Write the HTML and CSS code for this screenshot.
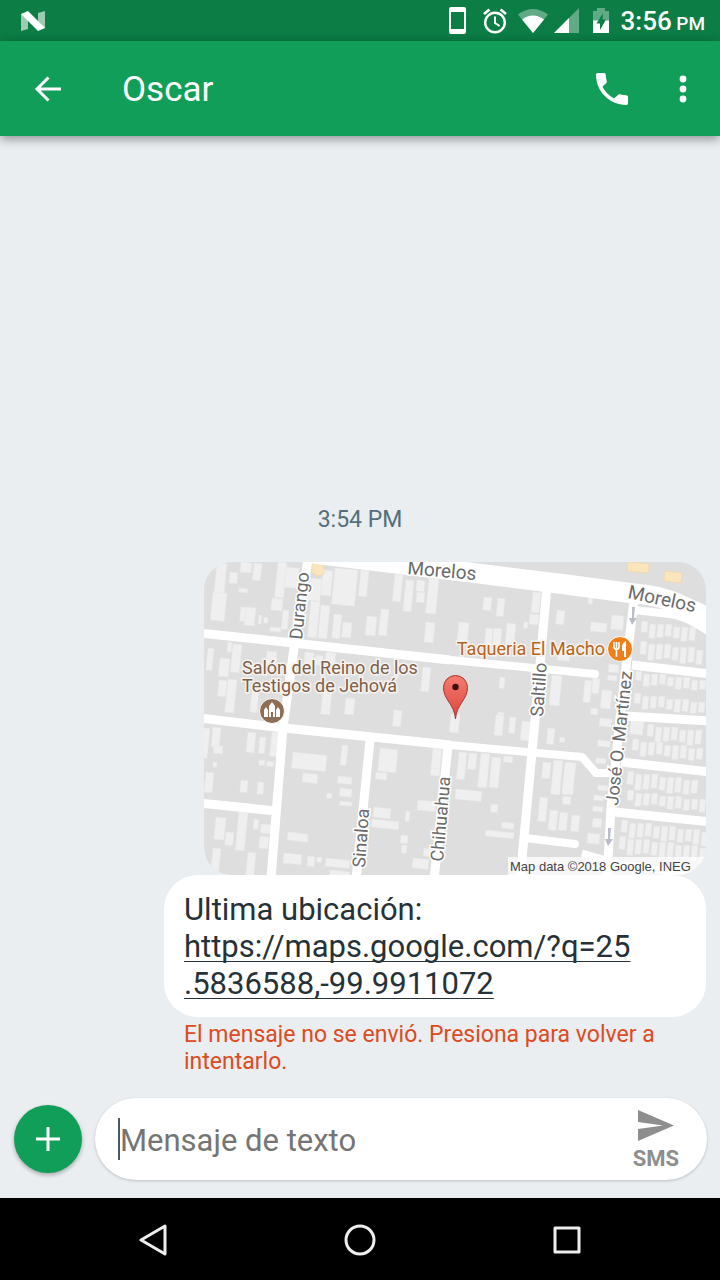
FILE: index.html
```html
<!DOCTYPE html>
<html lang="es">
<head>
<meta charset="utf-8">
<meta name="viewport" content="width=device-width, initial-scale=1">
<title>Oscar</title>
<link rel="stylesheet" href="styles.css">
</head>
<body>
<div class="status-bar">
  <svg class="icon-n" viewBox="0 0 24 20" aria-hidden="true">
    <path d="M0 3 7 1v17l-7 2zM17 2l7-2v17l-7 2z" fill="#fff" opacity=".6"/>
    <path d="M0 3 7 0l17 17-7 3z" fill="#fff"/>
  </svg>
  <div class="status-icons">
    <svg class="icon-phone-outline" viewBox="0 0 17 27" aria-hidden="true"><path fill="#fff" fill-rule="evenodd" d="M2 0h13a2 2 0 0 1 2 2v23a2 2 0 0 1-2 2H2a2 2 0 0 1-2-2V2a2 2 0 0 1 2-2zm0 5v17h13V5z"/></svg>
    <svg class="icon-alarm" viewBox="0 0 24 26" fill="none" stroke="#fff" aria-hidden="true"><circle cx="12" cy="14.500" r="9.800" stroke-width="2.400"/><path d="M12 8.500v6.500l4.600 3" stroke-width="2"/><path d="m1 6 5.500-4.600M23 6l-5.500-4.600" stroke-width="2.600"/></svg>
    <svg class="icon-wifi" viewBox="0 0 30 24" fill="#fff" aria-hidden="true"><path opacity=".35" d="M0 5.500Q15-5.500 30 5.500L15 24z"/><path d="M4 10.500Q15 2.500 26 10.500L15 24z"/></svg>
    <svg class="icon-signal" viewBox="0 0 25 25" fill="#fff" aria-hidden="true"><path opacity=".35" d="M25 0v25H0z"/><path d="M15 10v15H0z"/></svg>
    <svg class="icon-battery" viewBox="0 0 16 25" aria-hidden="true"><path fill="#fff" opacity=".35" d="M0 3h4V0h8v3h4v10H0z"/><path fill="#fff" d="M0 12.500h16V25H0z"/><path fill="#0b7d45" d="M10 5 3.500 15.500H7V22l6-10.500H9.500z"/></svg>
    <time class="clock">3:56 <small>PM</small></time>
  </div>
</div>

<header class="app-bar">
  <button class="icon-button" type="button" aria-label="Atrás">
    <svg class="icon-back" viewBox="0 0 28 26" fill="none" stroke="#fff" stroke-width="3" aria-hidden="true"><path d="M14.500 1.500 3 13l11.500 11.500M2.500 13H27"/></svg>
  </button>
  <h1 class="contact">Oscar</h1>
  <button class="icon-button" type="button" aria-label="Llamar">
    <svg class="icon-call" viewBox="3 3 18 18" fill="#fff" aria-hidden="true"><path d="M6.620 10.790c1.440 2.830 3.760 5.140 6.590 6.590l2.200-2.200c.27-.27.67-.36 1.020-.24 1.120.37 2.330.57 3.570.57.550 0 1 .45 1 1V20c0 .55-.45 1-1 1-9.390 0-17-7.610-17-17 0-.55.45-1 1-1h3.500c.55 0 1 .45 1 1 0 1.250.2 2.450.57 3.570.11.35.03.74-.25 1.020l-2.200 2.200z"/></svg>
  </button>
  <button class="icon-button menu-button" type="button" aria-label="Más opciones">
    <svg class="icon-more" viewBox="0 0 8 28" fill="#fff" aria-hidden="true"><circle cx="4" cy="4" r="3.400"/><circle cx="4" cy="14" r="3.400"/><circle cx="4" cy="24" r="3.400"/></svg>
  </button>
</header>

<main class="conversation">
  <time class="timestamp">3:54 PM</time>
  <div class="message">
    <div class="map-frame">
    <svg class="map" viewBox="204 562 502 313" role="img" aria-label="Mapa">
      <rect x="204" y="562" width="502" height="313" fill="#dedede"/>
      <g id="buildings" fill="#efefef" stroke="#e6e6e6" stroke-width=".5"></g>
      <g fill="#fbe5bd" stroke="#f3d5a0" stroke-width=".6"><path d="m312 564 6-1 6 2v9l-6 2-6-3z"/><path d="m628 562 21 2-1 9-21-2z"/><path d="m665 571 17 2-1 10-17-2z"/></g>
      <g fill="none" stroke="#fff" stroke-width="9" stroke-linejoin="round">
        <path stroke-width="20" d="M300 552 450 570l120 15 60 8q28 2 46 10l40 18"/>
        <path stroke-width="8" d="m634 610 36 4q16 2 38 17"/>
        <path d="m308 560-14 88-11 80-12 150M370 740l-14 140M448 746l-14 134M547 586l-12 134-15 160M634 600l-14 118-9 90-4 70"/>
        <path d="m200 633 250 27M200 718l84 10 166 17M632 665l78 9M625 716l85 5M621 762l89 10M615 812l95 10M200 803l76 8"/>
        <path stroke-linecap="round" stroke-width="8" d="m440 659 155 15M440 744l142 13 14 16h15M525 838l50 6"/>
        <path stroke-width="7" d="m582 853 35 10 90 15"/>
      </g>
      <g fill="#b9bcc9"><path d="M632 607h3l-1 11h3l-5 7-3-7h3z"/><path d="M608 828h3l-1 11h3l-5 7-3-7h3z"/></g>
      <g class="street">
        <text class="avenue" transform="translate(407 574) rotate(5)">Morelos</text>
        <text class="avenue" transform="translate(627 598) rotate(12)">Morelos</text>
        <text transform="translate(302 640) rotate(-84)">Durango</text>
        <text transform="translate(543 717) rotate(-86)">Saltillo</text>
        <text transform="translate(365 868) rotate(-86)">Sinaloa</text>
        <text transform="translate(443 862) rotate(-85)">Chihuahua</text>
        <text transform="translate(618 806) rotate(-84)">José O. Martínez</text>
      </g>
      <g class="place">
        <text x="242" y="674">Salón del Reino de los</text>
        <text x="242" y="692">Testigos de Jehová</text>
      </g>
      <text class="place food" x="605" y="655" text-anchor="end">Taqueria El Macho</text>
      <circle cx="272" cy="711" r="12.500" fill="#8d6e57" stroke="#fff"/>
      <path fill="#fff" d="M264 717v-7l2-3 2 3v7zM276 717v-7l2-3 2 3v7zM269 717v-11l3-4 3 4v11h-2v-5h-2v5z"/>
      <circle cx="620" cy="649" r="12.500" fill="#ef8019" stroke="#fff"/>
      <path d="M614 642v5q0 2 2.500 2.500V657M619 642v5q0 2-2.500 2.500V642" fill="none" stroke="#fff" stroke-width="1.600"/>
      <path d="M626 641v16h-2v-6h-2v-5q1-4 4-5z" fill="#fff"/>
      <defs><linearGradient id="pin" x1="0" y1="0" x2="0" y2="1"><stop offset="0" stop-color="#f77b71"/><stop offset="1" stop-color="#d9453c"/></linearGradient></defs>
      <path d="M455.500 719c-1-15-12-19-12-31.500a12 12 0 0 1 24 0c0 12.500-11 16.500-12 31.500z" fill="url(#pin)" stroke="#a8352d"/>
      <circle cx="455.500" cy="687" r="3.200" fill="#3c0f0c"/>
      <rect x="508" y="857" width="198" height="18" fill="#fff" opacity=".75"/>
      <text class="attribution" x="510" y="871">Map data ©2018 Google, INEG</text>
    </svg>
    </div>
    <div class="bubble">
      <p>Ultima ubicación:</p>
      <a href="https://maps.google.com/?q=25.5836588,-99.9911072">https://maps.google.com/?q=25<wbr>.5836588,-99.9911072</a>
    </div>
    <button class="retry" type="button">El mensaje no se envió. Presiona para volver a intentarlo.</button>
  </div>
</main>

<form class="composer">
  <button class="attach" type="button" aria-label="Adjuntar">
    <svg class="icon-plus" viewBox="0 0 24 24" stroke="#fff" stroke-width="3" aria-hidden="true"><path d="M12 0v24M0 12h24"/></svg>
  </button>
  <div class="field">
    <input class="text-input" type="text" placeholder="Mensaje de texto" aria-label="Mensaje de texto">
    <button class="send" type="button">
      <svg class="icon-send" viewBox="0 0 36 31" fill="#8e8e8e" aria-hidden="true"><path d="M0 0 36 15.500 0 31V19l25-3.500L0 12z"/></svg>
      <span>SMS</span>
    </button>
  </div>
</form>

<nav class="nav-bar">
  <button class="nav-button" type="button" aria-label="Atrás"><svg class="nav-icon" viewBox="0 0 32 32"><path d="M28 2v28L4 16z"/></svg></button>
  <button class="nav-button" type="button" aria-label="Inicio"><svg class="nav-icon" viewBox="0 0 32 32"><circle cx="16" cy="16" r="14"/></svg></button>
  <button class="nav-button" type="button" aria-label="Recientes"><svg class="nav-icon" viewBox="0 0 32 32"><path d="M4 4h24v24H4z"/></svg></button>
</nav>
<script src="map.js"></script>
</body>
</html>
```
FILE: styles.css
```css
* { box-sizing: border-box; }

body {
  margin: 0;
  min-height: 100vh;
  display: flex;
  flex-direction: column;
  background: #eaeef1;
  font-family: Roboto, "Noto Sans", sans-serif;
}

button {
  border: 0;
  padding: 0;
  background: none;
  font: inherit;
  color: inherit;
}

svg { display: block; flex: none; }

.status-bar {
  display: flex;
  align-items: center;
  justify-content: space-between;
  height: 41px;
  padding: 0 15px 0 21px;
  background: #0b7d45;
  color: #fff;
}
.icon-n { width: 24px; height: 20px; }
.status-icons { display: flex; align-items: center; }
.icon-phone-outline { width: 17px; height: 27px; margin-right: 17px; }
.icon-alarm { width: 24px; height: 26px; margin-right: 11px; }
.icon-wifi { width: 30px; height: 24px; margin-right: 6px; }
.icon-signal { width: 25px; height: 25px; margin-right: 14px; }
.icon-battery { width: 16px; height: 25px; margin-right: 12px; }
.clock { font-size: 26px; line-height: 32px; font-weight: 500; padding-top: 3px; }
.clock small { font-size: 19px; margin-left: -2px; }

.app-bar {
  position: relative;
  display: flex;
  align-items: center;
  height: 95px;
  padding: 0 13px 0 14px;
  background: #119e59;
  color: #fff;
  box-shadow: 0 3px 10px rgba(0, 0, 0, .4);
}
.icon-button {
  display: flex;
  align-items: center;
  justify-content: center;
  width: 68px;
  height: 68px;
}
.icon-back { width: 28px; height: 26px; }
.icon-call { width: 32px; height: 32px; }
.icon-more { width: 8px; height: 28px; }
.menu-button { width: 48px; margin-left: 13px; }
.contact {
  flex: 1;
  margin: 0;
  padding: 3px 0 0 40px;
  font-size: 35px;
  line-height: 44px;
  font-weight: 400;
}

.conversation {
  flex: 1;
  display: flex;
  flex-direction: column;
  justify-content: flex-end;
  padding: 0 14px 23px;
}
.timestamp {
  margin-bottom: 28px;
  text-align: center;
  font-size: 23px;
  line-height: 28px;
  color: #546e7a;
}
.message {
  width: 79%;
  max-width: 542px;
  align-self: flex-end;
}
.map-frame { padding-left: 40px; }
.map {
  width: 100%;
  height: auto;
  border-radius: 28px;
}
.street { font-size: 18px; fill: #6b6b6b; stroke: #fff; stroke-width: 3px; paint-order: stroke; }
.avenue { font-size: 19px; }
.place { font-size: 18px; fill: #7d5f4a; stroke: #f7f3f0; stroke-width: 3px; paint-order: stroke; }
.food { fill: #b5651b; }
.attribution { font-family: "Liberation Sans", Arial, sans-serif; font-size: 13px; fill: #444; }

.bubble {
  padding: 16px 20px 15px;
  border-radius: 34px;
  background: #fff;
  color: #263238;
  font-size: 31px;
  line-height: 37px;
}
.bubble p { margin: 0; }
.bubble a {
  color: inherit;
  text-decoration-thickness: 1px;
  text-underline-offset: 4px;
  text-decoration-skip-ink: none;
}
.retry {
  width: 100%;
  padding: 4px 20px 0;
  text-align: left;
  font-size: 23px;
  line-height: 27px;
  color: #dd4b20;
}

.composer {
  display: flex;
  align-items: center;
  gap: 13px;
  padding: 0 13px 18px 14px;
}
.attach {
  display: flex;
  align-items: center;
  justify-content: center;
  flex: none;
  width: 68px;
  height: 68px;
  border-radius: 50%;
  background: #119e59;
  box-shadow: 0 2px 4px rgba(0, 0, 0, .3);
}
.icon-plus { width: 24px; height: 24px; }
.field {
  flex: 1;
  display: flex;
  align-items: center;
  height: 82px;
  padding: 0 28px 0 23px;
  border-radius: 41px;
  background: #fff;
  box-shadow: 0 1px 3px rgba(0, 0, 0, .2);
}
.field::before {
  content: "";
  width: 2px;
  height: 42px;
  background: #455a64;
}
.text-input {
  flex: 1;
  min-width: 0;
  border: 0;
  padding: 3px 0 0;
  background: none;
  outline: 0;
  font: 400 31px/40px Roboto, "Noto Sans", sans-serif;
  color: #263238;
}
.text-input::placeholder { color: #757575; opacity: 1; }
.send {
  display: flex;
  flex-direction: column;
  align-items: center;
  gap: 5px;
  padding-top: 4px;
  font-size: 22px;
  line-height: 26px;
  font-weight: 700;
  color: #8e8e8e;
}
.icon-send { width: 36px; height: 31px; }

.nav-bar {
  display: flex;
  align-items: center;
  justify-content: center;
  height: 82px;
  padding: 2px 50px 0;
  background: #000;
}
.nav-button { flex: 1; display: flex; justify-content: center; }
.nav-icon { width: 32px; height: 32px; fill: none; stroke: #eee; stroke-width: 3; stroke-linejoin: round; }
```
FILE: map.js
```javascript
// Building footprints: x, y, width, height in map units.
const footprints = [
  [217,563,10,32],[230,572,8,11],[241,562,11,10],[254,563,8,17],[213,592,14,28],[239,588,9,4],[241,607,5,14],[246,607,10,18],[259,615,3,9],[264,617,4,6],[278,562,9,35],[272,598,11,12],[286,567,13,20],[283,610,6,19],[270,627,11,4],
  [310,578,12,22],[323,570,10,25],[335,568,23,36],[361,570,8,26],[311,601,9,36],[321,605,9,33],[334,614,8,24],[343,622,9,15],[367,616,10,19],[381,609,8,26],[395,574,8,27],[406,580,8,31],[417,580,8,11],[417,592,8,10],[429,578,10,35],[426,622,9,20],
  [208,648,6,22],[220,658,10,18],[228,642,4,10],[233,644,9,28],[219,680,8,16],[228,679,9,33],[267,651,10,18],[252,690,7,22],[305,652,9,12],[316,655,7,10],[326,652,10,12],[423,667,8,24],[323,690,9,24],[346,698,9,16],[394,710,8,16],
  [484,597,8,13],[498,598,7,18],[533,592,8,20],[530,614,9,10],[557,610,8,14],[589,595,4,9],[591,622,16,9],[612,615,12,14],[524,622,4,6],[459,622,10,20],[486,628,7,17],[494,628,8,17],[507,623,9,20],[558,650,12,10],
  [609,664,10,8],[608,675,9,5],[500,677,5,11],[552,675,10,30],[585,680,7,22],[593,678,7,15],[602,690,10,18],[591,708,7,6],[498,712,6,14],[451,714,9,18],
  [204,728,6,30],[213,727,8,20],[214,745,9,8],[248,732,8,20],[260,737,6,16],[272,732,8,24],[259,760,6,5],[267,761,7,5],[213,762,4,5],[206,772,8,20],[241,780,7,12],[258,782,6,12],[293,752,34,16],[342,745,6,20],[303,773,15,9],[338,776,14,7],[340,788,12,8],[340,801,12,4],[327,793,5,5],
  [380,748,18,23],[376,772,11,7],[433,748,9,20],[431,768,9,7],[418,800,18,10],[374,807,17,10],[372,819,27,8],[406,811,4,10],[216,817,10,22],[226,832,8,13],[239,812,9,38],[254,819,5,10],[261,824,11,9],[260,836,9,12],[213,848,8,24],[248,852,8,24],
  [288,832,20,8],[284,853,18,10],[308,856,7,10],[317,857,5,5],[326,858,24,8],[330,870,20,6],[401,835,7,8],[402,845,5,8],[413,858,16,10],[424,848,7,8],
  [496,715,8,20],[510,717,6,16],[522,721,9,19],[548,728,7,16],[560,737,5,5],[459,752,8,27],[469,753,8,16],[481,753,9,34],[492,757,9,30],[504,756,9,6],[456,789,26,10],[491,804,7,8],[502,822,12,6],[486,830,28,6],
  [543,762,8,16],[554,760,9,34],[565,762,11,32],[540,797,8,24],[550,810,8,20],[560,812,8,18],[572,815,8,16],[563,796,8,8],[600,718,12,8],[598,740,12,6],[596,758,10,5],[598,785,10,5],[594,795,10,5],[593,806,10,5],[593,818,9,9],[588,833,12,10],[631,720,13,14]
];

// Terraced rows on the east side: x, y, count, width, height.
const rows = [
  [642,621,7,6,13],[641,641,8,6,15],[636,671,9,6,11],[635,693,9,6,12],
  [648,724,7,6,14],[633,739,9,6,13],[628,771,9,6,15],[628,790,10,6,12],
  [622,820,11,6,14],[620,836,11,6,15]
];
for (const [x, y, count, w, h] of rows) {
  for (let i = 0; i < count; i++) {
    footprints.push([x + i * 8, y + i + (i * 5 % 3), w, h + (i * 7 % 4) - 2]);
  }
}

const layer = document.getElementById("buildings");
for (const [x, y, w, h] of footprints) {
  const shape = document.createElementNS("http://www.w3.org/2000/svg", "path");
  shape.setAttribute("d", `M${x} ${y}l${w} ${w * 0.1} ${-h * 0.1} ${h} ${-w} ${-w * 0.1}z`);
  layer.append(shape);
}
```
